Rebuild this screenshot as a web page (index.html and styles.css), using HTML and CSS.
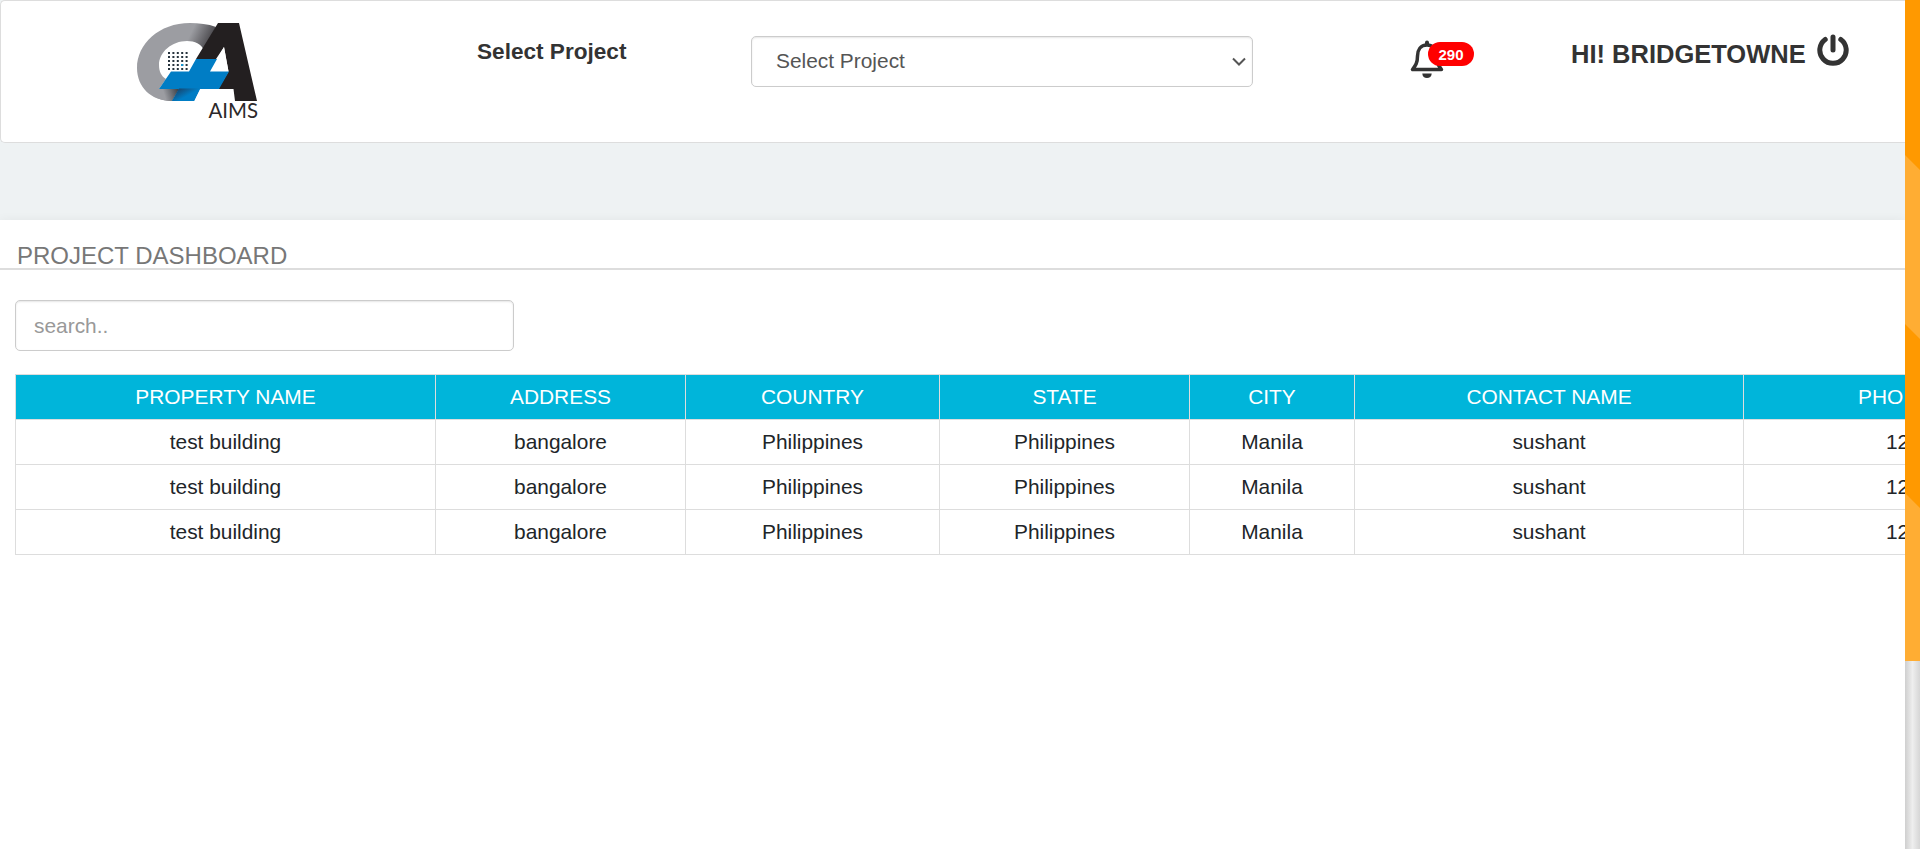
FILE: index.html
```html
<!DOCTYPE html>
<html lang="en">
<head>
<meta charset="utf-8">
<title>Project Dashboard</title>
<link rel="stylesheet" href="styles.css">
</head>
<body>
<div class="window">
  <div class="page">
    <header class="navbar">
      <svg class="logo" viewBox="0 0 160 120" role="img" aria-label="AIMS">
        <defs>
          <linearGradient id="ring" gradientUnits="userSpaceOnUse" x1="69" y1="27" x2="92" y2="38">
            <stop offset="0" stop-color="#9c9da2"/><stop offset="1" stop-color="#38363a"/>
          </linearGradient>
          <linearGradient id="fold" gradientUnits="userSpaceOnUse" x1="44" y1="84" x2="60" y2="79">
            <stop offset="0" stop-color="#9c9da2"/><stop offset="1" stop-color="#30353c"/>
          </linearGradient>
          <linearGradient id="leg" gradientUnits="userSpaceOnUse" x1="60" y1="78" x2="65" y2="87">
            <stop offset="0" stop-color="#17466f"/><stop offset="1" stop-color="#007dc5"/>
          </linearGradient>
        </defs>
        <path fill="url(#ring)" d="M96 17C88 14 79 13 70 13C39 13 17 34 17 58C17 77 31 91 52 91L58 78L39 79L46 69C41 66 39 61 39 55C39 42 52 31 67 31C75 31 81 34 84 40Z"/>
        <path fill="url(#fold)" d="M40 78H60L52 91C45 91 38 89 33 86Z"/>
        <path fill="#231f20" fill-rule="evenodd" d="M98 13H119L137 91H115L113.500 79H98L108.500 61.500L104 37L96 49H76Z"/>
        <path fill="#fff" d="M104 37L108.500 61.500H90Z"/>
        <path fill="#007dc5" d="M76 49H97L90 61.500H109L99 79H80L74 91H52L59 79H39L51 61.500H69Z"/>
        <path fill="url(#leg)" d="M59 78.500H80L74 91H52Z"/>
        <g fill="none" stroke="#26333d" stroke-width="2" stroke-dasharray="2 2.400"><path d="M48 43H68"/><path d="M48 47H68"/><path d="M48 51H68"/><path d="M48 55H68"/><path d="M48 59H68"/></g>
        <path fill="#1493cf" d="M61 54H63.300V56H61Z"/>
        <text class="logo-text" x="88.500" y="108" textLength="49.500" lengthAdjust="spacingAndGlyphs">AIMS</text>
      </svg>
      <label class="picker-label" for="project">Select Project</label>
      <div class="picker" id="project">
        <span>Select Project</span>
        <svg class="chevron" viewBox="0 0 14 9"><path d="M1 1.500L7 7.500L13 1.500"/></svg>
      </div>
      <div class="alerts">
        <svg class="bell" viewBox="0 0 34 38"><path class="stroke" d="M17 5C10.500 5 7.500 10 7.500 16C7.500 23 5.500 25.500 2.500 29.500H31.500C28.500 25.500 26.500 23 26.500 16C26.500 10 23.500 5 17 5Z"/><path d="M15 5V2.500A2 2 0 0 1 19 2.500V5ZM12.300 33.500H21.700C21.700 36.500 19.500 38 17 38S12.300 36.500 12.300 33.500Z"/></svg>
        <span class="badge">290</span>
      </div>
      <div class="user">
        <span>HI! BRIDGETOWNE</span>
        <svg class="power" viewBox="0 0 32 33"><path d="M8.200 5.500A13.200 13.200 0 1 0 23.800 5.500M16 3V16"/></svg>
      </div>
    </header>
    <main class="panel">
      <h1 class="title">PROJECT DASHBOARD</h1>
      <div class="content">
        <input class="search" type="text" placeholder="search..">
        <table class="grid">
          <colgroup><col class="c-name"><col class="c-address"><col class="c-country"><col class="c-state"><col class="c-city"><col class="c-contact"><col class="c-phone"></colgroup>
          <thead><tr><th>PROPERTY NAME</th><th>ADDRESS</th><th>COUNTRY</th><th>STATE</th><th>CITY</th><th>CONTACT NAME</th><th class="cut-head">PHO</th></tr></thead>
          <tbody>
            <tr><td>test building</td><td>bangalore</td><td>Philippines</td><td>Philippines</td><td>Manila</td><td>sushant</td><td class="cut">12</td></tr>
            <tr><td>test building</td><td>bangalore</td><td>Philippines</td><td>Philippines</td><td>Manila</td><td>sushant</td><td class="cut">12</td></tr>
            <tr><td>test building</td><td>bangalore</td><td>Philippines</td><td>Philippines</td><td>Manila</td><td>sushant</td><td class="cut">12</td></tr>
          </tbody>
        </table>
      </div>
    </main>
  </div>
  <div class="scrollbar">
    <svg class="thumb" viewBox="0 0 15 661"><path fill="#ffad33" d="M0 0H15V661H0Z"/><path fill="#ff9900" d="M0 0H15V170L0 155ZM0 324L15 339V508L0 493Z"/></svg>
  </div>
</div>
</body>
</html>
```
FILE: styles.css
```css
* { box-sizing: border-box; }
body { margin: 0; font: 20.9px/28.57px "Liberation Sans", Arial, sans-serif; color: #333; }
.window { display: flex; width: 1920px; height: 849px; overflow: hidden; }
.page { width: 1905px; overflow: hidden; background: #eef2f3; }
.navbar { display: flex; align-items: flex-start; height: 143px; background: #fff; border: 1px solid #ddd; border-right: 0; border-radius: 5px 0 0 5px; }
.logo { width: 160px; height: 120px; margin: 9px 0 0 119px; flex: none; }
.logo-text { font: 21px Lato, sans-serif; fill: #2c292a; }
.picker-label { width: 274px; margin: 35px 0 0 197px; font-size: 22.6px; line-height: 31px; font-weight: bold; white-space: nowrap; }
.picker { display: flex; align-items: center; justify-content: space-between; width: 502px; height: 51px; margin-top: 35px; padding: 0 6px 0 24px; border: 1px solid #ccc; border-radius: 5px; box-shadow: inset 0 1px 2px rgba(0,0,0,.1); color: #555; }
.chevron { width: 14px; height: 9px; fill: none; stroke: #555; stroke-width: 2; }
.alerts { position: relative; width: 64px; height: 38px; margin: 39px 0 0 157px; }
.bell { width: 34px; height: 38px; fill: #333; }
.bell .stroke { fill: none; stroke: #333; stroke-width: 3.5; stroke-linejoin: round; }
.badge { position: absolute; left: 18px; top: 2px; width: 46px; height: 24px; border-radius: 12px; background: #f00; color: #fff; font-size: 15px; line-height: 25px; font-weight: bold; text-align: center; }
.user { display: flex; align-items: flex-start; margin: 33px 0 0 97px; font-size: 25.5px; line-height: 40px; font-weight: bold; white-space: nowrap; }
.power { width: 32px; height: 33px; margin: 0 0 0 11px; fill: none; stroke: #333; stroke-width: 5; stroke-linecap: round; }
.panel { height: 629px; margin-top: 77px; padding-top: 22px; background: #fff; box-shadow: 0 0 10px rgba(0,0,0,.05); }
.title { margin: 0; height: 28px; padding-left: 17px; border-bottom: 2px solid #ddd; color: #777; font-size: 24px; line-height: 28px; font-weight: normal; }
.content { padding: 30px 0 0 15px; }
.search { display: block; width: 499px; height: 51px; margin: 0 0 23px; padding: 0 18px; border: 1px solid #ccc; border-radius: 5px; box-shadow: inset 0 1px 2px rgba(0,0,0,.1); font: 20.9px "Liberation Sans", sans-serif; }
.search::placeholder { color: #999; opacity: 1; }
.grid { width: 1891px; border-collapse: collapse; table-layout: fixed; color: #212529; }
.grid th, .grid td { height: 45px; padding: 0; border: 1px solid #ddd; font-weight: normal; text-align: center; white-space: nowrap; }
.grid th { background: #00b5da; color: #fff; }
.grid .cut-head { padding-left: 114px; text-align: left; }
.grid .cut { padding-left: 142px; text-align: left; }
.c-name { width: 420px; }
.c-address { width: 250px; }
.c-country { width: 254px; }
.c-state { width: 250px; }
.c-city { width: 165px; }
.c-contact { width: 389px; }
.c-phone { width: 163px; }
.scrollbar { width: 15px; background: linear-gradient(90deg, #cfcfcf, #eee 50%, #d6d6d6); }
.thumb { display: block; width: 15px; height: 661px; }
```
